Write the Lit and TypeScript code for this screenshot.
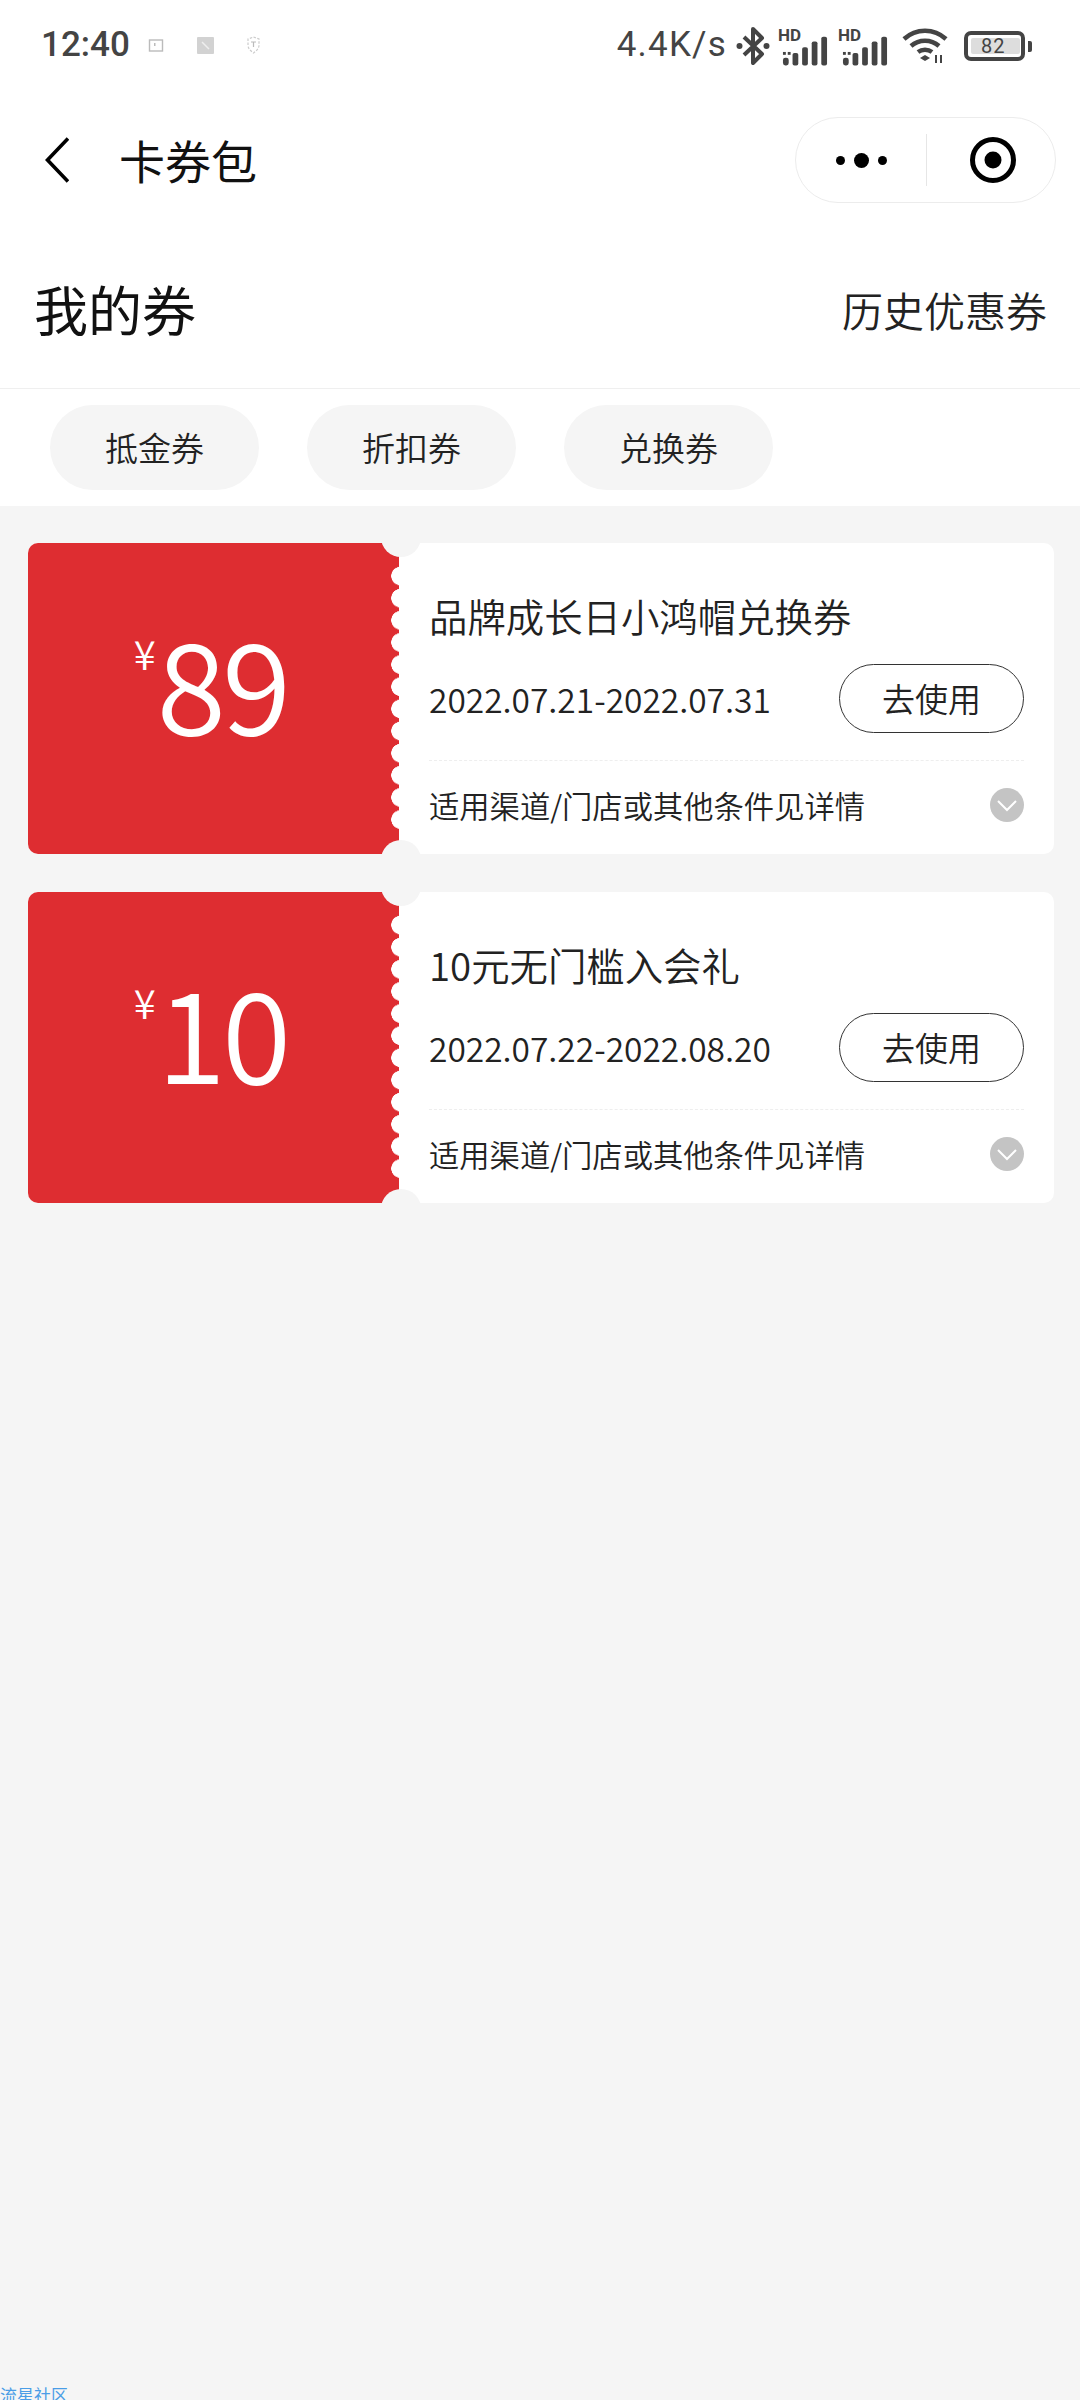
import { LitElement, html, css, svg } from 'lit';
import { customElement } from 'lit/decorators.js';

const coupons = [
  { amount: '89', title: '品牌成长日小鸿帽兑换券', date: '2022.07.21-2022.07.31' },
  { amount: '10', title: '10元无门槛入会礼', date: '2022.07.22-2022.08.20' },
];

const signal = svg`
  <rect x="1" y="22" width="6" height="8" rx="2.5"/>
  <rect x="11" y="17" width="6" height="13" rx="2"/>
  <rect x="21" y="11" width="6" height="19" rx="2"/>
  <rect x="31" y="5" width="6" height="25" rx="2"/>
  <rect x="41" y="0" width="6" height="30" rx="2"/>
  <rect x="1" y="16" width="3" height="3" /><rect x="6" y="16" width="3" height="3" />
`;

@customElement('app-root')
export class AppRoot extends LitElement {
  static styles = css`
    :host {
      display: flex;
      flex-direction: column;
      width: 1080px;
      height: 2400px;
      overflow: hidden;
      background: #f5f5f5;
      font-family: 'Noto Sans CJK SC', 'Noto Sans', sans-serif;
      color: #222;
    }
    .top { background: #fff; }
    .status {
      height: 70px;
      padding: 18px 0 0 41px;
      box-sizing: border-box;
      display: flex;
      align-items: flex-start;
      color: #444;
      font-family: Roboto, sans-serif;
    }
    .time { font-size: 35px; font-weight: 500; line-height: 54px; width: 102px; }
    .note { display: flex; align-items: center; margin: 18px 0 0 5px; }
    .note svg { display: block; }
    .note svg + svg { margin-left: 33px; }
    .net { margin-left: auto; display: flex; align-items: flex-start; padding-right: 48px; }
    .speed { font-size: 35px; line-height: 54px; letter-spacing: 1.2px; margin-right: 9px; }
    .net svg { display: block; margin-top: 8px; fill: #444; }
    .hd { position: relative; width: 50px; height: 36px; margin: 12px 8px 0 10px; }
    .hd b { position: absolute; left: -2px; top: -4px; font: 700 17px/18px Roboto, sans-serif; color: #444; }
    .hd svg { position: absolute; left: 2px; top: 6px; margin: 0; }
    .battery {
      box-sizing: border-box;
      width: 61px; height: 30px;
      margin: 13px 0 0 16px;
      border: 4px solid #444;
      border-radius: 7px;
      padding: 3px;
      display: flex;
    }
    .battery span {
      width: 39px; flex: none;
      background: #ddd;
      border-radius: 2px;
      font: 400 20px/16px Roboto, sans-serif;
      padding-left: 10px;
      white-space: nowrap;
      letter-spacing: 1px;
    }
    .cap { width: 4px; height: 11px; margin: 23px 0 0 3px; background: #444; border-radius: 0 2px 2px 0; }

    .nav { height: 90px; margin-top: 45px; display: flex; align-items: center; padding: 0 24px 0 45px; }
    .nav .back { display: block; flex: none; }
    .nav h1 { margin: 0 0 0 50px; padding-bottom: 2px; font-size: 46px; font-weight: 400; color: #111; line-height: 60px; flex: 1; }
    .capsule {
      box-sizing: border-box;
      width: 261px; height: 86px;
      border: 1px solid #ececec;
      border-radius: 43px;
      display: flex;
      align-items: center;
    }
    .dots { width: 130px; display: flex; justify-content: center; align-items: center; gap: 9px; }
    .dots i { background: #000; border-radius: 50%; width: 9px; height: 9px; display: block; }
    .dots i.big { width: 15px; height: 15px; }
    .sep { width: 1px; height: 52px; background: #e6e6e6; }
    .target { margin-left: 42px; display: block; }

    .head {
      box-sizing: border-box;
      height: 154px;
      margin-top: 30px;
      display: flex;
      align-items: center;
      justify-content: space-between;
      padding: 0 33px 6px 34px;
      border-bottom: 1px solid #efefef;
    }
    .head h2 { margin: 0; font-size: 54px; font-weight: 400; color: #111; }
    .head a { font-size: 41px; color: #222; font-weight: 350; }

    .tabs { display: flex; gap: 48px; padding: 16px 0 16px 50px; }
    .tab {
      box-sizing: border-box;
      width: 209px; height: 85px;
      padding-bottom: 2px;
      border-radius: 43px;
      background: #f5f5f5;
      font-size: 33px;
      font-weight: 350;
      color: #222;
      display: flex;
      align-items: center;
      justify-content: center;
    }

    .list { flex: 1; padding: 37px 26px 0 28px; display: flex; flex-direction: column; gap: 38px; }
    .coupon {
      position: relative;
      height: 311px;
      display: flex;
      overflow: hidden;
      border-radius: 10px;
      background: #fff;
    }
    .coupon::before, .coupon::after {
      content: '';
      position: absolute;
      z-index: 1;
      left: 353px;
      width: 40px; height: 40px;
      border-radius: 50%;
      background: #f5f5f5;
    }
    .coupon::before { top: -26px; }
    .coupon::after { bottom: -26px; }
    .amount {
      position: relative;
      width: 371px;
      flex: none;
      background: #de2d31;
      color: #fff;
      display: flex;
      justify-content: center;
      padding-right: 6px;
      box-sizing: border-box;
    }
    .amount::after {
      content: '';
      position: absolute;
      right: 0;
      top: 22px;
      width: 8px;
      height: 266px;
      background: radial-gradient(circle at 9.5px 11px, #fff 9px, transparent 9.5px) 0 0 / 8px 22.15px repeat-y;
    }
    .yen { font-size: 40px; font-weight: 350; line-height: 44px; margin: 88px 1px 0 0; }
    .num { font-size: 126px; font-weight: 350; line-height: 150px; margin-top: 62px; letter-spacing: -4px; }
    .body { flex: 1; padding: 0 30px 0 30px; display: flex; flex-direction: column; min-width: 0; }
    .title { font-size: 38.4px; font-weight: 350; line-height: 56px; margin-top: 44px; color: #222; }
    .row { display: flex; align-items: center; justify-content: space-between; height: 68px; margin-top: 21px; }
    .date { font-size: 33.5px; font-weight: 350; color: #222; }
    .btn {
      box-sizing: border-box;
      width: 185px; height: 69px;
      border: 1px solid #333;
      border-radius: 35px;
      font-size: 33px;
      font-weight: 350;
      display: flex;
      align-items: center;
      justify-content: center;
    }
    .foot {
      margin-top: 28px;
      border-top: 1px dashed #eee;
      flex: 1;
      display: flex;
      align-items: center;
      justify-content: space-between;
      padding-bottom: 6px;
    }
    .foot span { font-size: 30.3px; font-weight: 350; color: #222; }
    .foot svg { display: block; flex: none; }

    .mark {
      font-size: 17px;
      line-height: 17px;
      color: #4a9de6;
      margin: 0 0 -3px 0;
      height: 17px;
    }
  `;

  renderStatus() {
    return html`
      <div class="status">
        <span class="time">12:40</span>
        <div class="note">
          <svg width="16" height="13" viewBox="0 0 16 13"><rect x="1.5" y="1" width="13" height="11" fill="none" stroke="#bbb" stroke-width="1.4"/><rect x="6" y="4" width="1.5" height="3" fill="#bbb"/></svg>
          <svg width="17" height="17" viewBox="0 0 17 17"><rect width="17" height="17" rx="1" fill="#d2d2d2"/><path d="M5 5l7 7" stroke="#eee" stroke-width="1.5"/></svg>
          <svg width="13" height="18" viewBox="0 0 13 18"><path d="M6.5 1l5.5 2v6c0 4-3 6-5.500 8C4 15 1 13 1 9V3z" fill="none" stroke="#ccc" stroke-width="1.2" stroke-dasharray="2.5 1.5"/><path d="M4 6h5M6.5 6v5" stroke="#bbb" stroke-width="1.2"/></svg>
        </div>
        <div class="net">
          <span class="speed">4.4K/s</span>
          <svg width="34" height="40" viewBox="0 0 34 40">
            <path d="M8 11l18 17-9 9V3l9 9L8 29" fill="none" stroke="#444" stroke-width="4" stroke-linejoin="round"/>
            <circle cx="3.5" cy="20" r="3"/><circle cx="30.5" cy="20" r="3"/>
          </svg>
          <div class="hd"><b>HD</b><svg width="46" height="30" viewBox="0 0 48 30">${signal}</svg></div>
          <div class="hd" style="margin-left:2px"><b>HD</b><svg width="46" height="30" viewBox="0 0 48 30">${signal}</svg></div>
          <svg width="46" height="36" viewBox="0 0 46 36" style="margin:10px 0 0 4px">
            <path d="M2 11C14 0 32 0 44 11" fill="none" stroke="#444" stroke-width="4.5"/>
            <path d="M9 18c8-7 20-7 28 0" fill="none" stroke="#444" stroke-width="4.5"/>
            <path d="M16 24c4-3 10-3 14 0" fill="none" stroke="#444" stroke-width="4.5"/>
            <path d="M18 30l5-3 5 3-5 3z"/>
            <path d="M33 27h2v8h-2zM38 27h2v8h-2z"/>
          </svg>
          <div class="battery"><span>82</span></div>
          <div class="cap"></div>
        </div>
      </div>
    `;
  }

  render() {
    return html`
      <div class="top">
        ${this.renderStatus()}
        <div class="nav">
          <svg class="back" width="24" height="46" viewBox="0 0 24 46"><path d="M23 1.5L2.500 23 23 44.500" fill="none" stroke="#000" stroke-width="3.600"/></svg>
          <h1>卡券包</h1>
          <div class="capsule">
            <div class="dots"><i></i><i class="big"></i><i></i></div>
            <div class="sep"></div>
            <svg class="target" width="48" height="48" viewBox="0 0 48 48"><circle cx="24" cy="24" r="20.500" fill="none" stroke="#000" stroke-width="5"/><circle cx="24" cy="24" r="8.500"/></svg>
          </div>
        </div>
        <div class="head">
          <h2>我的券</h2>
          <a>历史优惠券</a>
        </div>
        <div class="tabs">
          <div class="tab">抵金券</div>
          <div class="tab">折扣券</div>
          <div class="tab">兑换券</div>
        </div>
      </div>
      <div class="list">
        ${coupons.map(
          (c) => html`
            <div class="coupon">
              <div class="amount">
                <span class="yen">¥</span>
                <span class="num">${c.amount}</span>
              </div>
              <div class="body">
                <div class="title">${c.title}</div>
                <div class="row">
                  <span class="date">${c.date}</span>
                  <span class="btn">去使用</span>
                </div>
                <div class="foot">
                  <span>适用渠道/门店或其他条件见详情</span>
                  <svg width="34" height="34" viewBox="0 0 34 34"><circle cx="17" cy="17" r="17" fill="#c4c4c4"/><path d="M8 13l9 9 9-9" fill="none" stroke="#fff" stroke-width="2"/></svg>
                </div>
              </div>
            </div>
          `
        )}
      </div>
      <div class="mark">流星社区</div>
    `;
  }
}

declare global {
  interface HTMLElementTagNameMap {
    'app-root': AppRoot;
  }
}
